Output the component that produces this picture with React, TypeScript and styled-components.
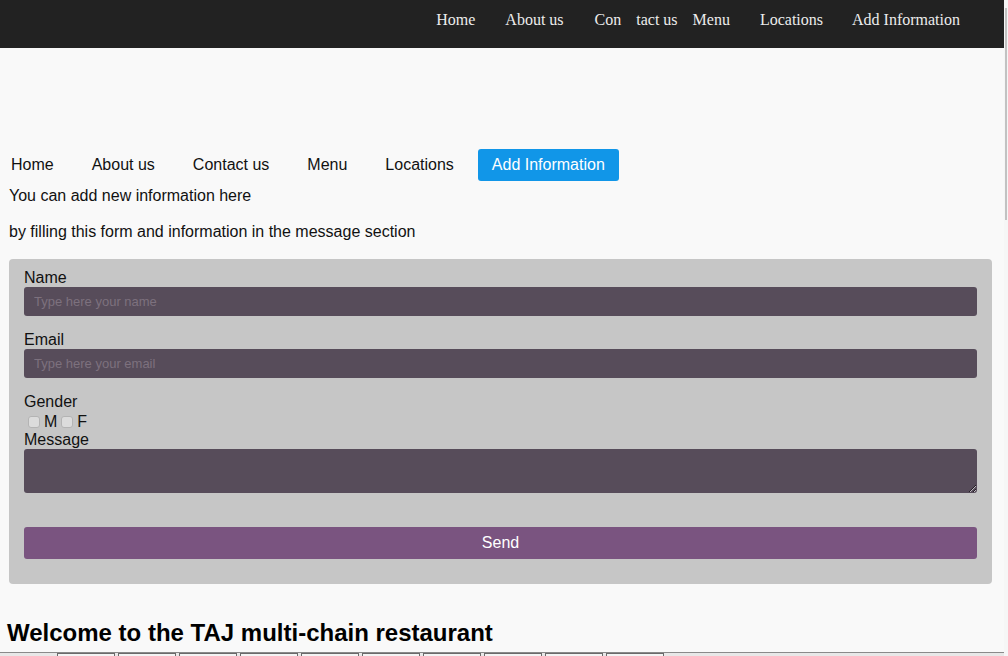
import React from "react";
import styled, { createGlobalStyle } from "styled-components";

const Global = createGlobalStyle`
  html, body { margin: 0; padding: 0; background: #f9f9f9; }
  body { font-family: "Liberation Sans", Arial, sans-serif; font-size: 16px; color: #000; }
`;

const Screen = styled.div`
  width: 1008px;
  height: 656px;
  overflow: hidden;
  display: flex;
  background: #f9f9f9;
`;

const Main = styled.div`
  width: 1004px;
  flex: none;
  display: flex;
  flex-direction: column;
`;

const TopBar = styled.header`
  height: 48px;
  background: #222222;
  display: flex;
  justify-content: flex-end;
  align-items: flex-start;
  padding: 11px 44px 0 0;
  box-sizing: border-box;
  flex: none;
`;

const TopLink = styled.a<{ $gap: number }>`
  font-family: "Liberation Serif", "Times New Roman", serif;
  font-size: 16px;
  line-height: 18px;
  color: #ececec;
  text-decoration: none;
  margin-left: ${(p) => p.$gap}px;
`;

const Content = styled.div`
  padding: 101px 12px 0 9px;
  display: flex;
  flex-direction: column;
  flex: 1;
`;

const SubNav = styled.nav`
  display: flex;
  align-items: center;
  gap: 10px;
  height: 32px;
  margin-left: -12px;
`;

const SubLink = styled.a<{ $active?: boolean }>`
  font-size: 16px;
  line-height: 32px;
  height: 32px;
  padding: 0 14px;
  color: ${(p) => (p.$active ? "#ffffff" : "#111111")};
  background: ${(p) => (p.$active ? "#1196e8" : "transparent")};
  border-radius: 3px;
  text-decoration: none;
`;

const Intro = styled.p<{ $top: number }>`
  margin: ${(p) => p.$top}px 0 0 0;
  font-size: 16px;
  line-height: 18px;
  color: #111;
`;

const FormPanel = styled.form`
  margin-top: 18px;
  background: #c6c6c6;
  border-radius: 4px;
  padding: 10px 15px 25px 15px;
  display: flex;
  flex-direction: column;
`;

const Label = styled.label<{ $top?: number }>`
  display: block;
  font-size: 16px;
  line-height: 18px;
  color: #111;
  margin-top: ${(p) => p.$top ?? 0}px;
`;

const TextInput = styled.input`
  height: 29px;
  box-sizing: border-box;
  border: none;
  border-radius: 3px;
  background: #574c5a;
  color: #eee;
  padding: 0 10px;
  font-family: "Liberation Sans", Arial, sans-serif;
  font-size: 13px;
  outline: none;
  &::placeholder { color: #7d717e; }
`;

const CheckRow = styled.div`
  display: flex;
  align-items: center;
  height: 18px;
  margin-top: 2px;
  font-size: 16px;
  line-height: 18px;
  color: #111;
`;

const Check = styled.input`
  appearance: none;
  width: 12px;
  height: 12px;
  margin: 0 4px 0 4px;
  background: #dcdcdc;
  border: 1px solid #b4b4b4;
  border-radius: 3px;
  box-sizing: border-box;
`;

const Message = styled.textarea`
  height: 44px;
  box-sizing: border-box;
  border: none;
  border-radius: 3px;
  background: #574c5a;
  color: #eee;
  resize: both;
  outline: none;
  padding: 6px 10px;
`;

const SendButton = styled.button`
  margin-top: 34px;
  height: 32px;
  border: none;
  border-radius: 3px;
  background: #7a5480;
  color: #ffffff;
  font-family: "Liberation Sans", Arial, sans-serif;
  font-size: 16px;
`;

const Welcome = styled.h2`
  margin: 35px 0 0 -2px;
  font-size: 24px;
  line-height: 28px;
  font-weight: bold;
  color: #000;
`;

const TabStrip = styled.div`
  margin-top: 5px;
  margin-left: -9px;
  margin-right: -12px;
  height: 10px;
  border-top: 1px solid #8a8a8a;
  display: flex;
  gap: 3px;
  padding-left: 57px;
  background: #e8e8e8;
`;

const TabBox = styled.div`
  width: 58px;
  height: 10px;
  border: 1px solid #6a6a6a;
  border-bottom: none;
  background: #f4f4f4;
  box-sizing: border-box;
`;

const ScrollTrack = styled.div`
  width: 4px;
  flex: none;
  background: #f6f6f6;
  padding-top: 8px;
  display: flex;
  justify-content: center;
`;

const ScrollThumb = styled.div`
  width: 2px;
  height: 212px;
  background: #c2c2c2;
`;

const topLinks: [string, number][] = [
  ["Home", 0],
  ["About us", 30],
  ["Con", 31],
  ["tact us", 15],
  ["Menu", 15],
  ["Locations", 30],
  ["Add Information", 29],
];

const subLinks = ["Home", "About us", "Contact us", "Menu", "Locations"];

export default function App() {
  return (
    <>
      <Global />
      <Screen>
        <Main>
          <TopBar>
            {topLinks.map(([t, g]) => (
              <TopLink key={t} $gap={g}>{t}</TopLink>
            ))}
          </TopBar>
          <Content>
            <SubNav>
              {subLinks.map((t) => (
                <SubLink key={t}>{t}</SubLink>
              ))}
              <SubLink $active>Add Information</SubLink>
            </SubNav>
            <Intro $top={6}>You can add new information here</Intro>
            <Intro $top={18}>by filling this form and information in the message section</Intro>
            <FormPanel onSubmit={(e) => e.preventDefault()}>
              <Label>Name</Label>
              <TextInput placeholder="Type here your name" />
              <Label $top={15}>Email</Label>
              <TextInput placeholder="Type here your email" />
              <Label $top={15}>Gender</Label>
              <CheckRow>
                <Check type="checkbox" />M<Check type="checkbox" />F
              </CheckRow>
              <Label>Message</Label>
              <Message />
              <SendButton type="submit">Send</SendButton>
            </FormPanel>
            <Welcome>Welcome to the TAJ multi-chain restaurant</Welcome>
            <TabStrip>
              {Array.from({ length: 10 }).map((_, i) => (
                <TabBox key={i} />
              ))}
            </TabStrip>
          </Content>
        </Main>
        <ScrollTrack>
          <ScrollThumb />
        </ScrollTrack>
      </Screen>
    </>
  );
}
